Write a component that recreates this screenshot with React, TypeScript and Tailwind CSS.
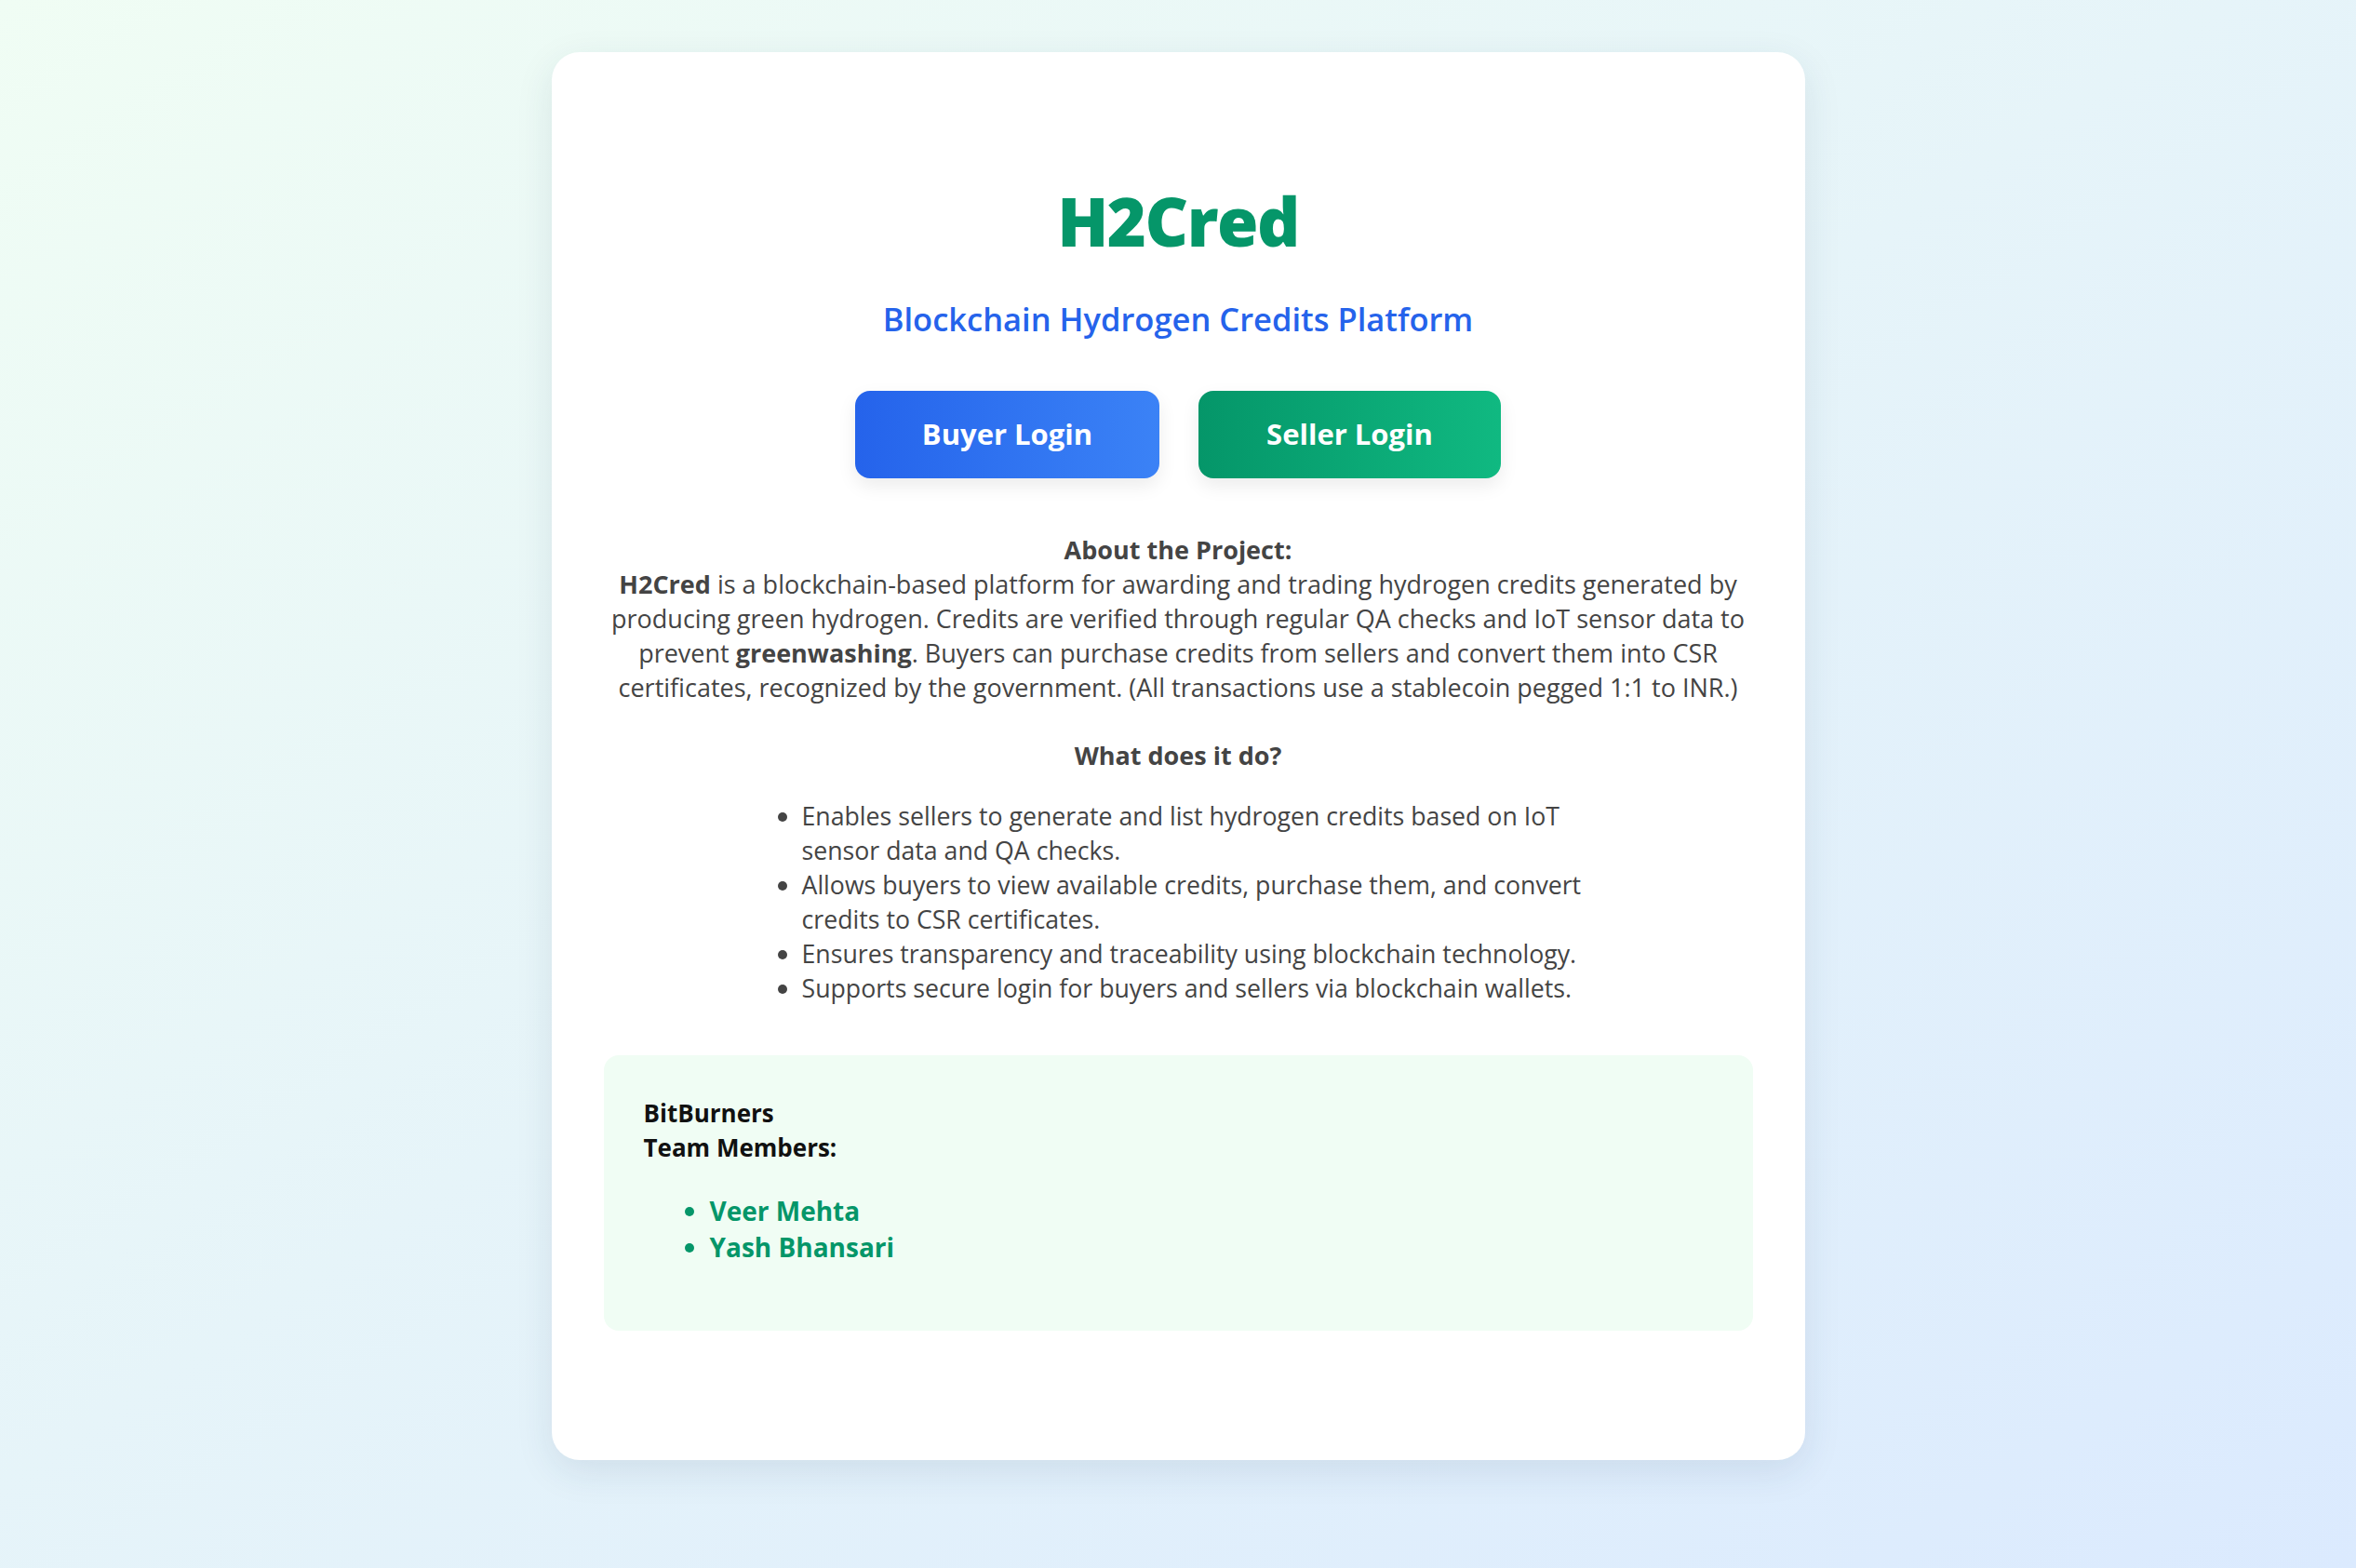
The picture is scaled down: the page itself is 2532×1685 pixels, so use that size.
import React from 'react';

const features = [
  ['Enables sellers to generate and list hydrogen credits based on IoT', 'sensor data and QA checks.'],
  ['Allows buyers to view available credits, purchase them, and convert', 'credits to CSR certificates.'],
  ['Ensures transparency and traceability using blockchain technology.'],
  ['Supports secure login for buyers and sellers via blockchain wallets.'],
];

const team = ['Veer Mehta', 'Yash Bhansari'];

const App = () => {
  return (
    <div className="min-h-screen w-full bg-gradient-to-br from-[#f0fdf4] to-[#dbeafe] pt-[56px] pb-[115px] font-['Open_Sans',sans-serif]">
      <div className="mx-auto w-[1347px] rounded-[30px] bg-white px-[56px] pt-[145px] pb-[139px] shadow-[0_12px_40px_rgba(30,60,90,0.10)]">
        <h1 className="text-center text-[72px] leading-none font-extrabold tracking-[-1.5px] text-[#059669]">H2Cred</h1>
        <p className="mt-[53px] text-center text-[34.5px] leading-none font-semibold text-[#2563eb]">
          Blockchain Hydrogen Credits Platform
        </p>

        <div className="mt-[59px] flex justify-center gap-[42px]">
          <button className="h-[94px] w-[327px] rounded-[16px] bg-gradient-to-r from-[#2563eb] to-[#3b82f6] text-[31px] font-bold text-white shadow-[0_8px_20px_rgba(0,0,0,0.08)]">
            Buyer Login
          </button>
          <button className="h-[94px] w-[325px] rounded-[16px] bg-gradient-to-r from-[#059669] to-[#10b981] text-[31px] font-bold text-white shadow-[0_8px_20px_rgba(0,0,0,0.08)]">
            Seller Login
          </button>
        </div>

        <p className="mt-[58px] text-center text-[27px] leading-[37px] text-[#444]">
          <strong>About the Project:</strong>
          <br />
          <strong>H2Cred</strong> is a blockchain-based platform for awarding and trading hydrogen credits generated by
          <br />
          producing green hydrogen. Credits are verified through regular QA checks and IoT sensor data to
          <br />
          prevent <strong>greenwashing</strong>. Buyers can purchase credits from sellers and convert them into CSR
          <br />
          certificates, recognized by the government. (All transactions use a stablecoin pegged 1:1 to INR.)
        </p>

        <h3 className="mt-[36px] text-center text-[27px] leading-[37px] font-bold text-[#444]">What does it do?</h3>

        <ul className="mt-[28px] ml-[213px] list-disc text-[26.7px] leading-[37px] text-[#444]">
          {features.map((lines, i) => (
            <li key={i}>
              {lines.map((line, j) => (
                <React.Fragment key={j}>
                  {j > 0 && <br />}
                  {line}
                </React.Fragment>
              ))}
            </li>
          ))}
        </ul>

        <div className="mt-[54px] rounded-[16px] bg-[#f0fdf4] px-[43px] pt-[44px] pb-[70px]">
          <p className="text-[26px] leading-[37px] font-bold text-[#111]">
            BitBurners
            <br />
            Team Members:
          </p>
          <ul className="mt-[30px] list-disc pl-[71px] text-[28px] leading-[39px] font-bold text-[#059669]">
            {team.map((name) => (
              <li key={name}>{name}</li>
            ))}
          </ul>
        </div>
      </div>
    </div>
  );
};

export default App;
